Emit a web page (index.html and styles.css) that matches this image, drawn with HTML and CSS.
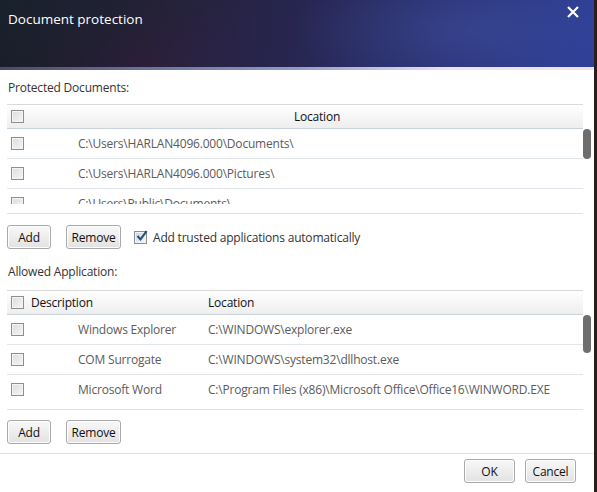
FILE: index.html
```html
<!DOCTYPE html>
<html>
<head>
<meta charset="utf-8">
<link rel="stylesheet" href="styles.css">
</head>
<body>
<div class="dialog">
  <div class="header">
    <div class="title">Document protection</div>
    <div class="close">
      <svg width="12" height="12" viewBox="0 0 12 12"><path d="M1 1L11 11M11 1L1 11" stroke="#fff" stroke-width="2.2"/></svg>
    </div>
    <div class="streak"></div>
  </div>
  <div class="content">
    <div class="label first">Protected Documents:</div>
    <div class="table t1">
      <div class="main">
        <div class="thead">
          <span class="cb"></span>
          <span class="th-center">Location</span>
        </div>
        <div class="viewport v1">
          <div class="row"><span class="cb"></span><span class="path">C:\Users\HARLAN4096.000\Documents\</span></div>
          <div class="row"><span class="cb"></span><span class="path">C:\Users\HARLAN4096.000\Pictures\</span></div>
          <div class="row"><span class="cb"></span><span class="path">C:\Users\Public\Documents\</span></div>
        </div>
      </div>
      <div class="track"><div class="thumb th1"></div></div>
    </div>
    <div class="actions">
      <button class="btn add">Add</button>
      <button class="btn remove">Remove</button>
      <span class="cb checked">
        <svg width="12" height="12" viewBox="0 0 12 12"><path d="M1.5 6L4.5 9.4L10.6 1.2" fill="none" stroke="#2a4e7a" stroke-width="2.1"/></svg>
      </span>
      <span class="cblabel">Add trusted applications automatically</span>
    </div>
    <div class="label second">Allowed Application:</div>
    <div class="table t2">
      <div class="main">
        <div class="thead">
          <span class="cb"></span>
          <span class="col-desc">Description</span>
          <span class="col-loc">Location</span>
        </div>
        <div class="viewport v2">
          <div class="row"><span class="cb"></span><span class="desc">Windows Explorer</span><span class="loc">C:\WINDOWS\explorer.exe</span></div>
          <div class="row"><span class="cb"></span><span class="desc">COM Surrogate</span><span class="loc">C:\WINDOWS\system32\dllhost.exe</span></div>
          <div class="row"><span class="cb"></span><span class="desc">Microsoft Word</span><span class="loc">C:\Program Files (x86)\Microsoft Office\Office16\WINWORD.EXE</span></div>
        </div>
      </div>
      <div class="track"><div class="thumb th2"></div></div>
    </div>
    <div class="actions a2">
      <button class="btn add">Add</button>
      <button class="btn remove">Remove</button>
    </div>
  </div>
  <div class="footer">
    <button class="btn ok">OK</button>
    <button class="btn cancel">Cancel</button>
  </div>
</div>
</body>
</html>
```
FILE: styles.css
```css
* { box-sizing: border-box; }
html, body { margin: 0; padding: 0; }
body {
  width: 597px;
  height: 492px;
  overflow: hidden;
  background: #fff;
  font-family: "Open Sans", "Noto Sans", sans-serif;
  font-size: 12px;
  letter-spacing: -0.2px;
}
.dialog {
  width: 597px;
  height: 492px;
  border-right: 3px solid #2b1d1a;
  position: relative;
  background: #fff;
}
.header {
  height: 70px;
  position: relative;
  background:
    radial-gradient(ellipse 180px 60px at 470px 30px, rgba(70,90,170,0.35), rgba(0,0,0,0)),
    linear-gradient(160deg, rgba(20,40,50,0.55) 0%, rgba(0,0,0,0) 40%),
    linear-gradient(100deg, #1c1a26 0%, #2a1f38 25%, #272651 50%, #2c3478 75%, #2e3f98 100%);
  display: flex;
  align-items: flex-start;
  justify-content: space-between;
  padding: 10px 15px 0 8px;
}
.title {
  color: #fff;
  font-size: 13.5px;
  line-height: 18px;
  letter-spacing: 0;
}
.close {
  width: 12px;
  height: 12px;
  margin-top: -4px;
}
.close svg { display: block; }
.streak {
  position: absolute;
  left: 0;
  right: 0;
  bottom: 0;
  height: 3px;
  background: linear-gradient(90deg, #4a4a70 0%, #8f9bc8 50%, #ece0f2 75%, #f5dff0 100%);
}
.content {
  padding: 0 0 0 7px;
}
.label {
  color: #333;
  font-size: 12px;
  line-height: 16px;
  padding-left: 1px;
}
.label.first { margin-top: 10px; margin-bottom: 8px; }
.label.second { margin-top: 15px; margin-bottom: 10px; }
.table {
  display: flex;
  width: 584px;
}
.main {
  width: 576px;
  border-bottom: 1px solid #dde3e8;
}
.t1 .main { height: 110px; }
.t2 .main { height: 120px; }
.thead {
  height: 25px;
  border-top: 1px solid #d9d9d9;
  border-bottom: 1px solid #c8d2da;
  background: linear-gradient(#ffffff, #eeeeee);
  display: flex;
  align-items: center;
  padding-left: 4px;
  position: relative;
  color: #111;
}
.th-center {
  position: absolute;
  left: 0; right: 0;
  text-align: center;
  padding-left: 44px;
}
.col-desc { margin-left: 7px; width: 177px; }
.viewport { overflow: hidden; }
.v1 { height: 75px; }
.v2 { height: 82px; }
.row {
  height: 30px;
  border-bottom: 1px solid #dfe5ea;
  display: flex;
  align-items: center;
  padding-left: 4px;
  color: #5b5b5b;
}
.cb {
  width: 13px;
  height: 13px;
  border: 1px solid #8e8e8e;
  background: linear-gradient(135deg, #dcdcdc, #f6f6f6);
  box-shadow: inset 0 0 0 1px #f4f4f4;
  display: inline-block;
  flex: none;
  position: relative;
}
.path { margin-left: 54px; }
.desc { margin-left: 54px; width: 130px; }
.track {
  width: 8px;
  position: relative;
}
.thumb {
  position: absolute;
  left: 0;
  width: 8px;
  background: #6e6e6e;
  border-radius: 4px;
}
.th1 { top: 25px; height: 30px; }
.th2 { top: 25px; height: 38px; }
.actions {
  display: flex;
  align-items: center;
  margin-top: 11px;
  height: 24px;
}
.a2 { margin-top: 10px; }
.btn {
  font-family: "Open Sans", "Noto Sans", sans-serif;
  font-size: 12px;
  letter-spacing: -0.2px;
  height: 24px;
  border: 1px solid #a9a9a9;
  border-radius: 3px;
  background: linear-gradient(#f8f8f8, #e2e2e2);
  color: #111;
  padding: 0;
  box-shadow: inset 0 0 0 1px #fdfdfd;
}
.add { width: 44px; }
.remove { width: 55px; margin-left: 15px; }
.checked {
  margin-left: 13px;
  background: linear-gradient(135deg, #c9d6e4, #f4f7fa);
}
.checked svg { position: absolute; left: 1px; top: -2px; }
.cblabel { margin-left: 6px; color: #333; }
.footer {
  position: absolute;
  left: 0; right: 0; bottom: 0;
  height: 39px;
  border-top: 1px solid #dde3e8;
  display: flex;
  justify-content: flex-end;
  align-items: flex-start;
  padding: 5px 18px 0 0;
  gap: 10px;
}
.ok, .cancel { width: 51px; }
```
